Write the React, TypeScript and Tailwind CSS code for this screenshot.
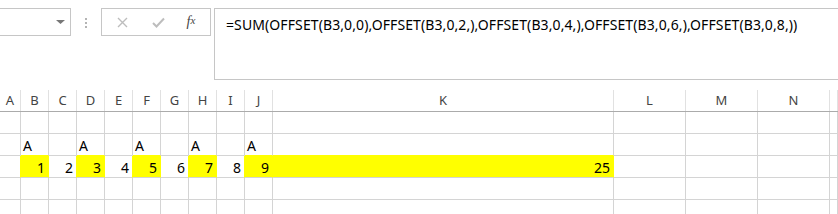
import React from "react";

type C = { w: string; text?: string; align?: "l" | "r"; y?: boolean; ry?: boolean; by?: boolean };

const widths = [
  "w-[21px]",
  "w-[28px]", "w-[28px]", "w-[28px]", "w-[28px]", "w-[28px]", "w-[28px]", "w-[28px]", "w-[28px]", "w-[28px]",
  "w-[341px]",
  "w-[72px]", "w-[72px]", "w-[72px]",
  "flex-1",
];
const headers = ["A", "B", "C", "D", "E", "F", "G", "H", "I", "J", "K", "L", "M", "N", ""];

function Cell({ c }: { c: C }) {
  const bg = c.y ? "bg-[#ffff00]" : "bg-white";
  const br = c.ry ? "border-r-[#ffff00]" : "border-r-[#d4d4d4]";
  const bb = c.by ? "border-b-[#ffff00]" : "border-b-[#d4d4d4]";
  const al = c.align === "r" ? "justify-end pr-[3px]" : "justify-start pl-[2px]";
  return (
    <div className={`${c.w} shrink-0 h-[22px] border-r border-b ${br} ${bb} ${bg} flex items-center pt-[2px] ${al} text-[14px] text-black overflow-visible whitespace-nowrap`}>
      {c.text}
    </div>
  );
}

export default function App() {
  const row2: C[] = widths.map((w, i) => ({
    w,
    text: [1, 3, 5, 7, 9].includes(i) ? "A" : undefined,
    by: [1, 3, 5, 7, 9, 10].includes(i),
  }));
  const nums: Record<number, string> = { 1: "1", 2: "2", 3: "3", 4: "4", 5: "5", 6: "6", 7: "7", 8: "8", 9: "9", 10: "25" };
  const row3: C[] = widths.map((w, i) => ({
    w,
    text: nums[i],
    align: "r",
    y: [1, 3, 5, 7, 9, 10].includes(i),
    ry: i <= 10,
  }));
  const empty: C[] = widths.map((w) => ({ w }));

  return (
    <div className="w-[838px] h-[214px] overflow-hidden bg-white font-['Noto_Sans','Open_Sans',sans-serif]">
      {/* formula bar */}
      <div className="h-[90px] pt-[8px] flex items-start">
        <div className="w-[71px] h-[28px] shrink-0 border border-l-0 border-[#c6c6c6] flex items-center justify-end pr-[5px]">
          <svg width="9" height="5" viewBox="0 0 9 5"><path d="M0 0 L9 0 L4.5 4 Z" fill="#777" /></svg>
        </div>
        <div className="w-[30px] h-[28px] shrink-0 flex flex-col items-center justify-center gap-[2px] pt-[1px]">
          <div className="w-[2px] h-[2px] bg-[#b4b4b4]" />
          <div className="w-[2px] h-[2px] bg-[#b4b4b4]" />
          <div className="w-[2px] h-[2px] bg-[#b4b4b4]" />
        </div>
        <div className="w-[110px] h-[28px] shrink-0 border border-[#c6c6c6] flex items-center">
          <div className="w-[38px] flex justify-center pl-[2px]">
            <svg width="11" height="11" viewBox="0 0 11 11"><path d="M1 1 L10 10 M10 1 L1 10" stroke="#bdbdbd" strokeWidth="1.4" /></svg>
          </div>
          <div className="w-[36px] flex justify-center">
            <svg width="13" height="11" viewBox="0 0 13 11"><path d="M1 6 L4.5 9.5 L12 1.5" stroke="#bdbdbd" strokeWidth="2" fill="none" /></svg>
          </div>
          <div className="w-[30px] flex justify-center text-[#444] italic font-['Liberation_Serif',serif] text-[14px] leading-none">
            f<span className="text-[11px]">x</span>
          </div>
        </div>
        <div className="w-[3px] shrink-0" />
        <div className="flex-1 h-[72px] border border-r-0 border-[#c6c6c6] pl-[11px] pt-[6px] text-[14px] tracking-[0.1px] leading-[19px] text-black whitespace-nowrap">
          =SUM(OFFSET(B3,0,0),OFFSET(B3,0,2,),OFFSET(B3,0,4,),OFFSET(B3,0,6,),OFFSET(B3,0,8,))
        </div>
      </div>
      {/* header */}
      <div className="flex h-[22px] border-b border-[#ababab]">
        {widths.map((w, i) => (
          <div key={i} className={`${w} shrink-0 h-full border-r border-[#e1e1e1] flex items-center justify-center text-[13px] text-[#444]`}>
            {headers[i]}
          </div>
        ))}
      </div>
      {[empty, row2, row3, empty, empty].map((r, ri) => (
        <div key={ri} className="flex">
          {r.map((c, ci) => (
            <Cell key={ci} c={c} />
          ))}
        </div>
      ))}
    </div>
  );
}
